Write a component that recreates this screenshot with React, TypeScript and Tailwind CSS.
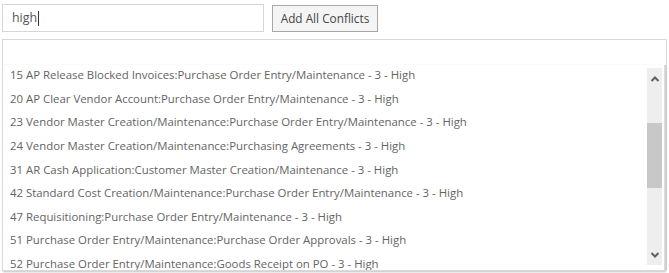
import React from 'react';

const conflicts = [
  '15 AP Release Blocked Invoices:Purchase Order Entry/Maintenance - 3 - High',
  '20 AP Clear Vendor Account:Purchase Order Entry/Maintenance - 3 - High',
  '23 Vendor Master Creation/Maintenance:Purchase Order Entry/Maintenance - 3 - High',
  '24 Vendor Master Creation/Maintenance:Purchasing Agreements - 3 - High',
  '31 AR Cash Application:Customer Master Creation/Maintenance - 3 - High',
  '42 Standard Cost Creation/Maintenance:Purchase Order Entry/Maintenance - 3 - High',
  '47 Requisitioning:Purchase Order Entry/Maintenance - 3 - High',
  '51 Purchase Order Entry/Maintenance:Purchase Order Approvals - 3 - High',
  '52 Purchase Order Entry/Maintenance:Goods Receipt on PO - 3 - High',
];

const App = () => {
  return (
    <div className="relative w-[669px] h-[273px] bg-white overflow-hidden font-['Open_Sans',sans-serif]">
      {/* underlying page edge on the right */}
      <div className="absolute right-[1px] top-[66px] w-[2px] h-[204px] border-l border-[#dcdcdc]"></div>

      <div className="pl-[2px] pt-[4px]">
        <div className="flex items-start gap-[8px]">
          <div className="w-[262px] h-[28px] border border-[#d6d6d6] flex items-center pl-[9px] text-[12.4px] text-[#555]">
            high<span className="inline-block w-[1px] h-[15px] bg-[#333] ml-[1px]"></span>
          </div>
          <button className="mt-[1px] w-[106px] h-[27px] border border-[#a8a8a8] bg-[#f4f4f4] text-[11.8px] text-[#444]">
            Add All Conflicts
          </button>
        </div>
        <div className="mt-[7px] w-[665px] h-[27px] border border-[#d6d6d6]"></div>
      </div>

      {/* dropdown list */}
      <div className="absolute left-[2px] top-[65px] w-[663px] h-[206px] bg-white border border-t-0 border-[#dadada] shadow-[1px_1px_2px_rgba(0,0,0,0.25)] flex">
        <div className="flex-1 overflow-hidden">
          <div className="-mt-[2px] pl-[7px]">
            {conflicts.map((c) => (
              <div key={c} className="h-[23.6px] flex items-center text-[11.4px] text-[#646464] whitespace-nowrap">
                {c}
              </div>
            ))}
          </div>
        </div>
        <div className="w-[15px] mt-[3px] mb-[5px] mr-[2px] bg-[#eeeeee] flex flex-col items-center">
          <svg width="10" height="8" viewBox="0 0 10 8" className="mt-[7px]">
            <path d="M1.5 6 L5 2.5 L8.5 6" fill="none" stroke="#606060" strokeWidth="2" />
          </svg>
          <div className="mt-[40px] w-[15px] h-[65px] bg-[#c8c8c8]"></div>
          <div className="flex-1"></div>
          <svg width="10" height="8" viewBox="0 0 10 8" className="mb-[6px]">
            <path d="M1.5 2 L5 5.5 L8.5 2" fill="none" stroke="#606060" strokeWidth="2" />
          </svg>
        </div>
      </div>
    </div>
  );
};

export default App;
